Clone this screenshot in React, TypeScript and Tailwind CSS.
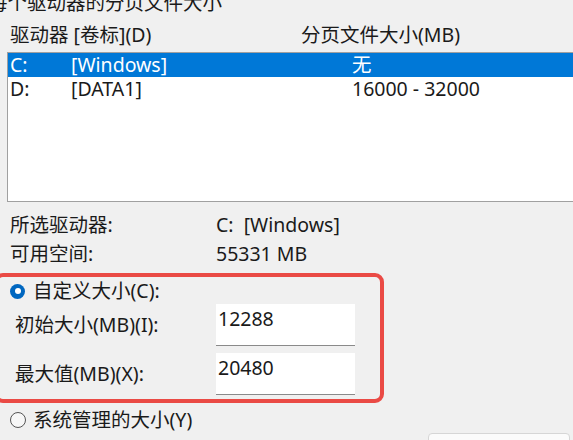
import React from "react";

const font = {
  fontFamily: '"Noto Sans", "Noto Sans CJK SC", sans-serif',
};

const drives = [
  { letter: "C:", label: "[Windows]", size: "无", selected: true },
  { letter: "D:", label: "[DATA1]", size: "16000 - 32000", selected: false },
];

const SizeField = ({ label, value }: { label: string; value: string }) => (
  <div className="flex items-center h-[42px]">
    <span className="w-[218px] pl-[17px] shrink-0 leading-[24px]">{label}</span>
    <div className="w-[139px] h-[42px] bg-white border-b border-[#8a8a8a] pl-[2px] pt-[2px] leading-[26px]">
      {value}
    </div>
  </div>
);

const App = () => {
  return (
    <div
      className="w-[573px] h-[440px] overflow-hidden bg-[#f0f0f0] text-[19.5px] text-[#1a1a1a]"
      style={font}
    >
      {/* group box title, cut off by the top edge */}
      <div className="flex items-center -mt-[9px] h-[24px]">
        <span className="-ml-[12px] leading-[24px] whitespace-nowrap">
          每个驱动器的分页文件大小
        </span>
        <div className="flex-1 h-px bg-[#dcdcdc] ml-1 -mt-[16px]" />
      </div>

      {/* column headers */}
      <div className="flex mt-[8px] h-[24px] leading-[24px] pl-[10px]">
        <span className="w-[291px] shrink-0">驱动器 [卷标](D)</span>
        <span>分页文件大小(MB)</span>
      </div>

      {/* drive list */}
      <div className="mt-[5px] ml-[7px] h-[150px] bg-white border-l border-y border-[#a0a0a0]">
        {drives.map((d) => (
          <div
            key={d.letter}
            className={`flex items-center h-[24px] pl-[2px] leading-[24px] ${
              d.selected ? "bg-[#0078d7] text-white" : ""
            }`}
          >
            <span className="w-[61px] shrink-0">{d.letter}</span>
            <span className="w-[281px] shrink-0">{d.label}</span>
            <span>{d.size}</span>
          </div>
        ))}
      </div>

      {/* selected drive info */}
      <div className="mt-[8px] pl-[10px]">
        <div className="flex items-center h-[29px]">
          <span className="w-[206px] shrink-0">所选驱动器:</span>
          <span className="whitespace-pre">C:  [Windows]</span>
        </div>
        <div className="flex items-center h-[29px]">
          <span className="w-[206px] shrink-0">可用空间:</span>
          <span>55331 MB</span>
        </div>
      </div>

      {/* highlighted custom size block */}
      <div className="mt-[5px] -ml-[6px] w-[390px] h-[130px] border-4 border-[#ea4a45] rounded-[9px]">
        <div className="mt-[2px] flex items-center h-[24px] pl-[12px]">
          <span className="w-[15px] h-[15px] rounded-full bg-[#0067c0] flex items-center justify-center shrink-0">
            <span className="w-[6px] h-[6px] rounded-full bg-white" />
          </span>
          <span className="ml-[8px] leading-[24px]">自定义大小(C):</span>
        </div>
        <div className="mt-[1px] flex flex-col gap-[7px]">
          <SizeField label="初始大小(MB)(I):" value="12288" />
          <SizeField label="最大值(MB)(X):" value="20480" />
        </div>
      </div>

      {/* system managed */}
      <div className="mt-[5px] flex items-center h-[24px] pl-[10px]">
        <span className="w-[16px] h-[16px] rounded-full border border-[#555] bg-[#f7f7f7] shrink-0" />
        <span className="ml-[7px] leading-[24px]">系统管理的大小(Y)</span>
      </div>

      {/* button peeking from the bottom */}
      <div className="flex justify-end mt-[1px] pr-[3px]">
        <div className="w-[142px] h-[30px] rounded-[4px] border border-[#d6d6d6] bg-[#fbfbfb]" />
      </div>
    </div>
  );
};

export default App;
